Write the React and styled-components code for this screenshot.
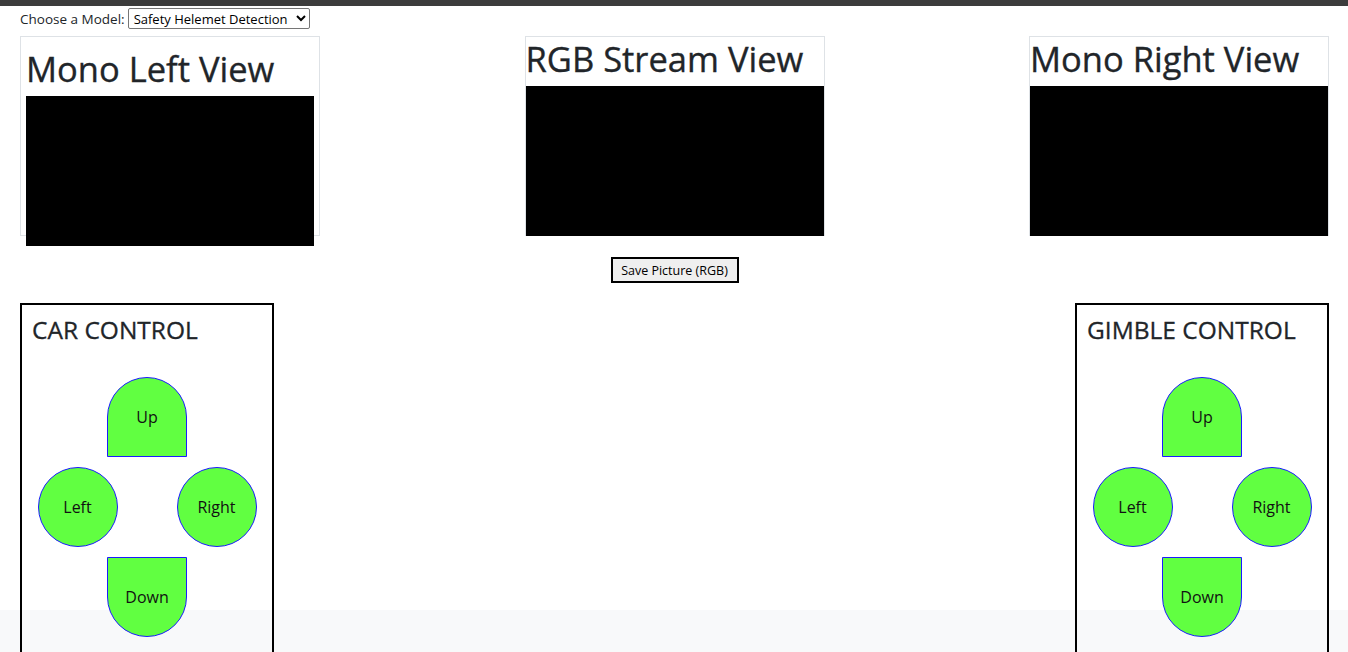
import React from 'react';
import styled, { createGlobalStyle } from 'styled-components';

const GlobalStyle = createGlobalStyle`
  * {
    box-sizing: border-box;
  }
  html, body {
    margin: 0;
    padding: 0;
    background: #f8f9fa;
    font-family: 'Open Sans', 'Noto Sans', sans-serif;
    color: #212529;
  }
`;

// white page on a light grey canvas; the grey shows from 610px down
const Page = styled.div`
  min-height: 100vh;
  background: linear-gradient(#ffffff 0, #ffffff 604px, #f8f9fa 604px);
  border-top: 6px solid #3c3c3c;
  padding: 2px 19px 0 20px;
`;

const ModelRow = styled.div`
  display: flex;
  align-items: center;
  gap: 3px;
  height: 21px;
  font-size: 13.5px;
`;

const ModelSelect = styled.select`
  height: 21px;
  width: 182px;
  font-family: 'Open Sans', 'Noto Sans', sans-serif;
  font-size: 13px;
  color: #000;
  border: 1px solid #767676;
  border-radius: 2px;
  background: #fff;
  padding: 0 1px;
`;

const ViewsRow = styled.div`
  display: flex;
  justify-content: space-between;
  margin-top: 7px;
`;

const ViewCard = styled.div`
  width: 300px;
  height: 200px;
  border: 1px solid #dee2e6;
  padding: ${p => p.$inset ? '10px 5px 0 5px' : '0'};
`;

const ViewTitle = styled.h1`
  margin: 0 0 6px 0;
  font-size: 34.5px;
  font-weight: 400;
  line-height: 43px;
  white-space: nowrap;
  -webkit-text-stroke: 0.35px #212529;
`;

const Screen = styled.div`
  width: 100%;
  height: 150px;
  background: #000;
`;

const SaveRow = styled.div`
  display: flex;
  justify-content: center;
  margin-top: 21px;
`;

const SaveButton = styled.button`
  height: 26px;
  width: 128px;
  padding: 0;
  border: 2px solid #000;
  background: #efefef;
  font-family: 'Open Sans', 'Noto Sans', sans-serif;
  font-size: 12.5px;
  color: #000;
`;

const ControlsRow = styled.div`
  display: flex;
  justify-content: space-between;
  margin-top: 20px;
`;

const ControlPanel = styled.div`
  width: 254px;
  height: 360px;
  border: 2px solid #000;
  padding: 10px 10px 0 10px;
`;

const PanelTitle = styled.h3`
  margin: 0;
  font-size: 24.5px;
  font-weight: 400;
  line-height: 30px;
  white-space: nowrap;
  -webkit-text-stroke: 0.3px #212529;
`;

const DPad = styled.div`
  display: flex;
  flex-direction: column;
  align-items: center;
  gap: 10px;
  margin-top: 32px;
`;

const SideRow = styled.div`
  display: flex;
  gap: 59px;
`;

const radii = {
  up: '40px 40px 0 0',
  down: '0 0 40px 40px',
  side: '50%',
};

const PadButton = styled.button`
  width: 80px;
  height: 80px;
  padding: 0;
  background: #61ff41;
  border: 1px solid #1a1aff;
  border-radius: ${p => radii[p.$shape]};
  font-family: 'Open Sans', 'Noto Sans', sans-serif;
  font-size: 16px;
  color: #111;
  display: flex;
  align-items: center;
  justify-content: center;
`;

const views = [
  { id: 'left', title: 'Mono Left View', inset: true },
  { id: 'rgb', title: 'RGB Stream View' },
  { id: 'right', title: 'Mono Right View' },
];

const Control = ({ title }) => (
  <ControlPanel>
    <PanelTitle>{title}</PanelTitle>
    <DPad>
      <PadButton $shape="up">Up</PadButton>
      <SideRow>
        <PadButton $shape="side">Left</PadButton>
        <PadButton $shape="side">Right</PadButton>
      </SideRow>
      <PadButton $shape="down">Down</PadButton>
    </DPad>
  </ControlPanel>
);

const App = () => (
  <>
    <GlobalStyle />
    <Page>
      <ModelRow>
        <label htmlFor="model">Choose a Model:</label>
        <ModelSelect id="model" defaultValue="helmet">
          <option value="helmet">Safety Helemet Detection</option>
        </ModelSelect>
      </ModelRow>

      <ViewsRow>
        {views.map(v => (
          <ViewCard key={v.id} $inset={v.inset}>
            <ViewTitle>{v.title}</ViewTitle>
            <Screen />
          </ViewCard>
        ))}
      </ViewsRow>

      <SaveRow>
        <SaveButton>Save Picture (RGB)</SaveButton>
      </SaveRow>

      <ControlsRow>
        <Control title="CAR CONTROL" />
        <Control title="GIMBLE CONTROL" />
      </ControlsRow>
    </Page>
  </>
);

export default App;
